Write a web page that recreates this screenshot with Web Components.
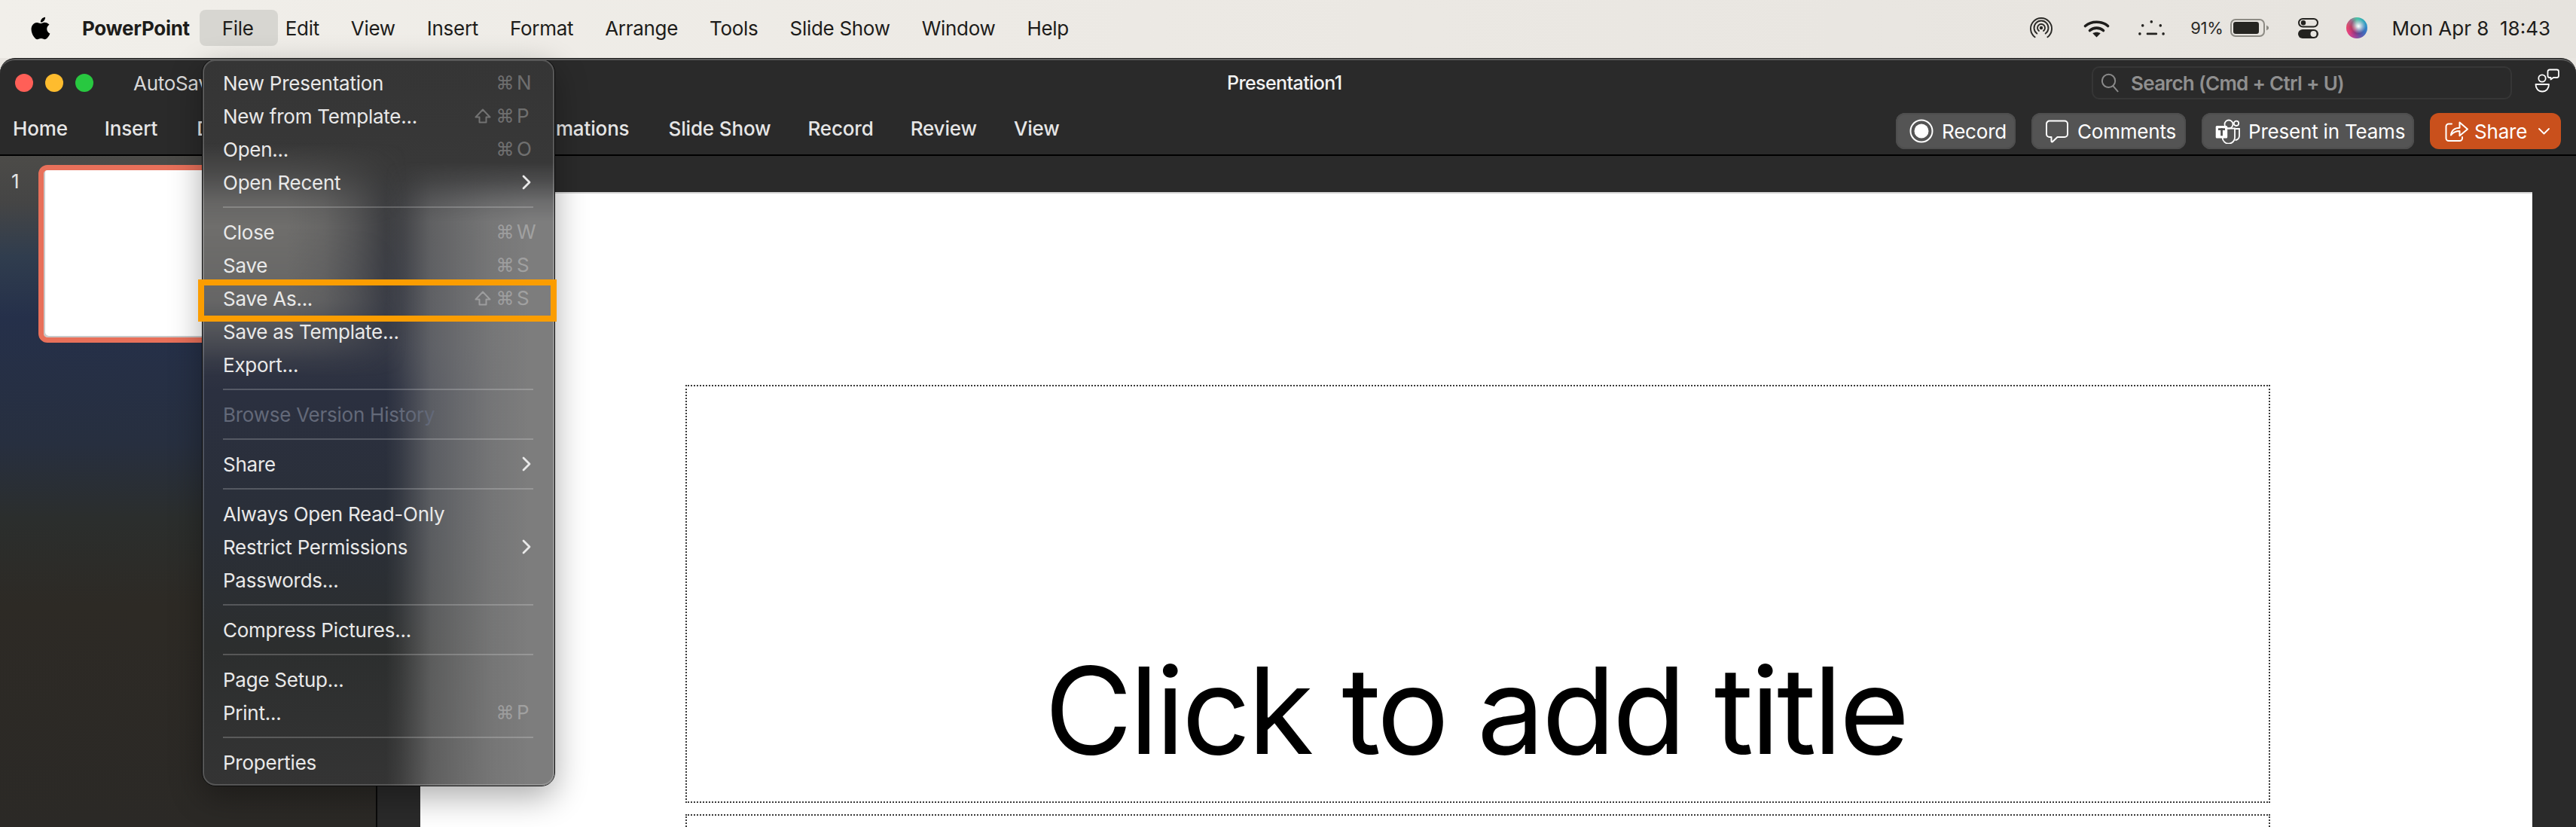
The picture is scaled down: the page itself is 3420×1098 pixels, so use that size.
<!DOCTYPE html>
<html lang="en"><head><meta charset="utf-8"><title>PowerPoint</title>
<style>
html,body{margin:0;padding:0;width:3420px;height:1098px;overflow:hidden;background:#e8e5e0;font-family:Inter,"Liberation Sans",sans-serif}
</style></head><body>
<app-root>
  <mac-menubar></mac-menubar>
  <ppt-window></ppt-window>
  <file-menu></file-menu>
</app-root>
<script>
function def(name, css, html){
  customElements.define(name, class extends HTMLElement{
    constructor(){super();const r=this.attachShadow({mode:'open'});
      if(typeof html!=='function'){
        const t=document.createElement('template');
        t.innerHTML='<style>'+css+'</style>'+html;
        r.appendChild(t.content.cloneNode(true));}}
    connectedCallback(){
      if(typeof html==='function'&&!this._d){this._d=1;
        const t=document.createElement('template');
        t.innerHTML='<style>'+css+'</style>'+html(this);
        this.shadowRoot.appendChild(t.content.cloneNode(true));}
    }
  });
}
const APPLE='<svg width="26" height="31" viewBox="3.5 1.5 17 21" preserveAspectRatio="none"><path fill="#000" d="M18.71 19.5c-.83 1.24-1.71 2.45-3.05 2.47-1.34.03-1.77-.79-3.29-.79-1.53 0-2 .77-3.27.82-1.31.05-2.3-1.32-3.14-2.53C4.25 17 2.94 12.45 4.7 9.39c.87-1.52 2.43-2.48 4.12-2.51 1.28-.02 2.5.87 3.29.87.78 0 2.26-1.07 3.81-.91.65.03 2.47.26 3.64 1.98-.09.06-2.17 1.28-2.15 3.81.03 3.02 2.65 4.03 2.68 4.04-.03.07-.42 1.44-1.38 2.83M13 3.5c.73-.83 1.94-1.46 2.94-1.5.13 1.17-.34 2.35-1.04 3.19-.69.85-1.83 1.51-2.95 1.42-.15-1.15.41-2.35 1.05-3.11z"/></svg>';

def('app-root',`:host{display:block;position:relative;width:3420px;height:1098px;overflow:hidden;font-family:Inter,"Liberation Sans",sans-serif}`,`<slot></slot>`);

def('mac-menubar',`
:host{display:flex;align-items:center;height:77px;box-sizing:border-box;padding:0 34px 3px 41px;background:linear-gradient(90deg,#f1efea,#ece9e4 45%,#e6e3de);color:#1d1c1a;font-size:26px;letter-spacing:-.3px;white-space:nowrap}
.apple{display:flex;width:26px;height:36px;margin-right:42px;align-items:center;justify-content:center}
b{font-weight:700;margin-right:43px}
.items{display:flex;gap:42px}
.on{position:relative;z-index:0}
.on::before{content:"";position:absolute;z-index:-1;left:-30px;right:-32px;top:-9px;bottom:-8px;background:#d7d6d1;border-radius:8px}
.status{margin-left:auto;display:flex;align-items:center}
svg{display:block}
.siri{width:28px;height:28px;border-radius:50%;background:radial-gradient(circle at 58% 42%,#fff 0,rgba(255,255,255,.75) 12%,rgba(255,255,255,0) 42%),radial-gradient(circle at 50% 50%,rgba(40,20,60,.55) 0,rgba(40,20,60,0) 60%),conic-gradient(from 0deg,#49c5a6,#2fa7b9,#2f8fc9,#3d6fc0,#6a55a8,#b33f95,#e5427f,#e0486d,#a4698a,#49c5a6)}
.pct{font-size:22px;letter-spacing:-.3px;color:#2a2926}
.dt{letter-spacing:0}
`,`
<span class="apple">${APPLE}</span><b>PowerPoint</b>
<div class="items"><span class="on">File</span><span>Edit</span><span>View</span><span>Insert</span><span>Format</span><span>Arrange</span><span>Tools</span><span>Slide Show</span><span>Window</span><span>Help</span></div>
<div class="status">
<svg style="margin-right:41px" width="30" height="28" viewBox="0 0 30 28" fill="none" stroke="#2b2a27" stroke-width="1.9" stroke-linecap="round"><path d="M6.6 26.2A14 14 0 1 1 23.4 26.2"/><path d="M9.3 21.6A9.5 9.5 0 1 1 20.7 21.6"/><path d="M12 18A5 5 0 1 1 18 18"/><circle cx="15" cy="14" r="2.2" fill="#2b2a27" stroke="none"/></svg>
<svg style="margin-right:38px" width="35" height="25" viewBox="0 0 35 25" fill="none" stroke="#1f1e1c" stroke-width="3.6" stroke-linecap="round"><path d="M2.5 9.5C10.5 2.5 24.5 2.5 32.5 9.5"/><path d="M8.5 15.5C13.5 11 21.5 11 26.5 15.5"/><path d="M12.3 19.2C15.5 17.2 19.5 17.2 22.7 19.2L17.5 24.5Z" fill="#1f1e1c" stroke="none"/></svg>
<svg style="margin-right:34px" width="35" height="20" viewBox="0 0 35 20" fill="#23221f"><circle cx="17.3" cy="1.9" r="1.8"/><circle cx="5.7" cy="6.9" r="1.8"/><circle cx="29.3" cy="6.9" r="1.8"/><circle cx="1.9" cy="17.9" r="1.8"/><circle cx="33.1" cy="17.9" r="1.8"/><rect x="10.7" y="16.6" width="14.4" height="2.6" rx="1.2"/></svg>
<span class="pct" style="margin-right:9px">91%</span>
<svg style="margin-right:39px" width="51" height="24" viewBox="0 0 51 24" fill="none"><rect x="1" y="1" width="44" height="22" rx="6" stroke="#8d8b84" stroke-width="2"/><rect x="4" y="4" width="34" height="16" rx="3.2" fill="#262521"/><path d="M48 8.5l3 2.2v2.6l-3 2.2z" fill="#8d8b84"/></svg>
<svg style="margin-right:37px" width="27" height="27" viewBox="0 0 27 27" fill="none"><rect x="1" y="1" width="25" height="10.5" rx="5.2" stroke="#23221f" stroke-width="2"/><circle cx="7" cy="6.2" r="3.2" fill="#23221f"/><rect y="15" width="27" height="12" rx="6" fill="#23221f"/><circle cx="20.5" cy="21" r="4" fill="#e8e5e0"/></svg>
<span class="siri" style="margin-right:33px"></span>
<span class="dt" style="white-space:pre">Mon Apr 8  18:43</span>
</div>`);

const I={
 rec:'<svg width="32" height="32" viewBox="0 0 32 32"><circle cx="16" cy="16" r="14.5" fill="none" stroke="#fff" stroke-width="2"/><circle cx="16" cy="16" r="9.5" fill="#fff"/></svg>',
 com:'<svg width="32" height="31" viewBox="0 0 32 31" fill="none" stroke="#fff" stroke-width="2" stroke-linejoin="round"><path d="M6 1.5h20a4 4 0 0 1 4 4v13.5a4 4 0 0 1-4 4H16.5l-6.5 6.2c-.6.5-1.5.1-1.5-.7v-5.500H6a4 4 0 0 1-4-4V5.500a4 4 0 0 1 4-4Z"/></svg>',
 teams:'<svg width="33" height="33" viewBox="0 0 33 33" fill="none" stroke="#fff" stroke-width="1.8"><circle cx="18" cy="7" r="5.500"/><circle cx="28" cy="5.800" r="3.200"/><path d="M15 12.500h11v11.500a8.200 8.200 0 0 1-16.400 1"/><path d="M27 13h5v9.500a5.500 5.500 0 0 1-5.500 5.500"/><rect x=".7" y="9" width="15.500" height="16.500" rx="1.500" fill="#fff" stroke="none"/><rect x="4" y="12.300" width="9" height="2.600" fill="#4a4a4a" stroke="none"/><rect x="7.200" y="12.300" width="2.700" height="10" fill="#4a4a4a" stroke="none"/></svg>',
 share:'<svg width="31" height="28" viewBox="0 0 31 28" fill="none" stroke="#fff" stroke-width="2" stroke-linejoin="round" stroke-linecap="round"><path d="M9 4.500H5A3.500 3.500 0 0 0 1.500 8v15.500A3.500 3.500 0 0 0 5 27h14.500a3.500 3.500 0 0 0 3.500-3.500V22"/><path d="M8 19.500c.5-6 5-9.800 11.500-9.800V2.500L30 11.500l-10.500 8.800v-6.300c-4.500 0-8.500 1.500-11.500 5.500Z"/></svg>',
 chev:'<svg width="15" height="9" viewBox="0 0 15 9" fill="none" stroke="#fff" stroke-width="1.800" stroke-linecap="round" stroke-linejoin="round"><path d="M1 1l6.500 6.500L14 1"/></svg>',
 person:'<svg width="33" height="32" viewBox="0 0 33 32" fill="none" stroke="#fff" stroke-width="1.800" stroke-linejoin="round"><circle cx="10" cy="13" r="4.700"/><path d="M1.500 21h17.500c0 5.500-3.500 9.500-8.800 9.500S1.500 26.500 1.500 21Z"/><path d="M20 1.500h9.500a2.500 2.500 0 0 1 2.500 2.500v5.500a2.500 2.500 0 0 1-2.500 2.500H25l-3.500 2.500v-2.500h-1.500a2.500 2.500 0 0 1-2.500-2.500V4a2.500 2.500 0 0 1 2.500-2.500Z"/></svg>',
 search:'<svg width="26" height="30" viewBox="0 0 30 32" fill="none" stroke="#8a8a8a" stroke-width="2.200" stroke-linecap="round"><ellipse cx="11" cy="13" rx="10" ry="10"/><path d="M18 21l7 8"/></svg>'
};

def('ppt-button',`
:host{display:inline-flex;align-items:center;box-sizing:border-box;height:48px;border-radius:12px;background:#545454;box-shadow:inset 0 0 0 2px #4e4e4e;color:#fff;font-size:26px;letter-spacing:-.2px;white-space:nowrap;gap:11px;padding-left:18px}
:host([accent]){background:#c9501c;box-shadow:none;padding-left:20px;gap:8px}
svg{display:block}
`,h=>`${I[h.getAttribute('icon')]}<slot></slot>${h.hasAttribute('menu')?'<span style="margin-left:7px">'+I.chev+'</span>':''}`);

def('ppt-titlebar',`
:host{display:block;box-sizing:border-box;height:129px;border-bottom:2px solid #000;background:#2a2a2a;color:#fff;font-size:26px;white-space:nowrap}
.r1{display:grid;grid-template-columns:1629px 153px 995px 558px 1fr;height:64px;align-items:center}
.left{display:flex;align-items:center;padding-left:20px}
.dot{width:24px;height:24px;border-radius:50%;margin-right:16px}
.auto{margin-left:37px;color:#d8d8d8;letter-spacing:-.3px}
.title{font-size:25px;font-weight:500;letter-spacing:-.6px;color:#f2f2f2}
.search{display:flex;align-items:center;box-sizing:border-box;height:44px;border:2px solid #363636;border-radius:10px;padding-left:11px;gap:13px;color:#8f8f8f;font-weight:600;letter-spacing:-.7px}
.search svg{display:block}
.person{margin-left:30px;display:block}
.r2{display:flex;justify-content:space-between;align-items:flex-start;padding:2px 20px 0 17px}
.tabs{display:flex;gap:49px;padding-top:10px;color:#e6e6e6;font-weight:500;letter-spacing:-.15px;line-height:34px}
.acts{display:flex;gap:21px;padding-top:6px}
`,`
<div class="r1">
 <div class="left"><span class="dot" style="background:#ff5f57"></span><span class="dot" style="background:#febc2e"></span><span class="dot" style="background:#28c840"></span><span class="auto">AutoSave</span></div>
 <div class="title">Presentation1</div><div></div>
 <div class="search">${I.search}<span>Search (Cmd + Ctrl + U)</span></div>
 <div class="person">${I.person}</div>
</div>
<div class="r2">
 <div class="tabs"><span>Home</span><span>Insert</span><span style="margin-left:3px">D</span><span style="margin-left:409px">mations</span><span style="margin-left:3px">Slide Show</span><span>Record</span><span>Review</span><span>View</span></div>
 <div class="acts">
  <ppt-button icon="rec" style="width:159px">Record</ppt-button>
  <ppt-button icon="com" style="width:205px">Comments</ppt-button>
  <ppt-button icon="teams" style="width:282px">Present in Teams</ppt-button>
  <ppt-button icon="share" accent menu style="width:174px">Share</ppt-button>
 </div>
</div>`);

def('slide-panel',`
:host{display:block;box-sizing:border-box;width:501px;border-right:2px solid #0a0a0a;background:linear-gradient(180deg,#4c4b48 0,#454545 7%,#303d4e 15%,#25304a 24%,#272f3f 43%,#2b2e2d 54%,#2d2a25 67%,#2b2926 100%);padding:12px 0 0 15px;color:#e4e4e4;font-size:26px}
.row{display:flex;align-items:flex-start}
.n{width:36px;line-height:44px}
.th{box-sizing:border-box;width:407px;height:236px;background:#fff;border:7px solid #e8705a;border-radius:12px;box-shadow:inset 2px -2px 0 #c9c9c9}
`,`<div class="row"><span class="n">1</span><div class="th"></div></div>`);

def('ppt-slide',`
:host{display:block;box-sizing:border-box;width:2804px;height:100%;background:#fff;border-top:2px solid #d6d6d6;padding:254px 0 0 352px;color:#000}
.ph{box-sizing:border-box;width:2104px;border:2px dotted #3a3a3a}
.t{height:555px;display:flex;justify-content:center;align-items:flex-end;font-size:160px;line-height:1;padding:0 6px 41px 0;letter-spacing:-4px;white-space:nowrap}
.b{height:300px;margin-top:15px}
`,`<div class="ph t">Click to add title</div><div class="ph b"></div>`);

def('ppt-window',`
:host{display:flex;flex-direction:column;box-sizing:border-box;height:1021px;border-top:1px solid #1a1a1a;border-radius:20px 20px 0 0;overflow:hidden;background:#2a2a2a;position:relative}
:host::before{content:"";position:absolute;z-index:3;left:0;right:0;top:0;height:20px;border-top:2px solid #5c5c5c;border-radius:20px 20px 0 0;pointer-events:none}
.body{display:flex;flex:1;min-height:0}
.canvas{flex:1;padding:48px 0 0 57px;background:#2a2a2a;min-width:0}
`,`<ppt-titlebar></ppt-titlebar><div class="body"><slide-panel></slide-panel><div class="canvas"><ppt-slide></ppt-slide></div></div>`);

const SHIFT='<svg width="22" height="20" viewBox="0 0 22 20" fill="none" stroke="currentColor" stroke-width="2" stroke-linejoin="round"><path d="M11 1.500L20.500 11.500H15.500V18.500H6.500V11.500H1.500Z"/></svg>';
def('menu-row',`
:host{display:flex;align-items:center;height:44px;padding:0 0 0 27px;color:#e9e9e9;font-size:26px;letter-spacing:-.25px;white-space:nowrap;position:relative}
:host([off]){color:#636979}
.sc{margin-left:auto;display:grid;grid-template-columns:22px 21px 26px;column-gap:6.5px;width:82px;margin-right:24px;color:rgba(255,255,255,.3);align-items:center;line-height:44px;letter-spacing:0}
.g svg{display:block}
.k{font-size:24px}
.ch{margin-left:auto;margin-right:31px;display:block}
`,h=>{const s=h.getAttribute('sc');let r='';
 if(s){const sh=s[0]==='S';const k=s[s.length-1];
  r=`<span class="sc"><span class="g">${sh?SHIFT:''}</span><span class="k">⌘</span><span>${k}</span></span>`;}
 if(h.hasAttribute('sub'))r='<svg class="ch" width="12" height="20" viewBox="0 0 12 20" fill="none" stroke="#e9e9e9" stroke-width="2.800" stroke-linecap="round" stroke-linejoin="round"><path d="M2 2l8 8-8 8"/></svg>';
 return `<slot></slot>${r}`;});

def('menu-sep',`:host{display:block;height:2px;margin:10px 28px 10px 27px;background:rgba(255,255,255,.2)}`,``);

def('file-menu',`
:host{position:absolute;left:268px;top:78px;width:469px;box-sizing:border-box;height:966px;padding:9px 0 0;border:1px solid #0c0c0c;border-radius:18px;box-shadow:0 14px 44px rgba(0,0,0,.33);font-family:Inter,"Liberation Sans",sans-serif}
.glass{position:absolute;inset:0;border-radius:17px;overflow:hidden;background:linear-gradient(180deg,#353535 0,#383838 140px,#343845 380px,#2b3040 440px,#2a2f38 620px,#2c2e2e 780px,#343434 964px)}
.glass i{position:absolute;inset:0;display:block}
.thumb{background:linear-gradient(90deg,#6f6e6c 111px,rgba(111,110,108,.85) 161px,rgba(111,110,108,.55) 201px,rgba(111,110,108,.15) 241px,rgba(111,110,108,0) 271px);-webkit-mask-image:linear-gradient(180deg,transparent 111px,rgba(0,0,0,.35) 151px,rgba(0,0,0,.85) 191px,#000 221px,rgba(0,0,0,.85) 321px,rgba(0,0,0,.68) 341px,rgba(0,0,0,.5) 361px,rgba(0,0,0,.1) 401px,transparent 421px);mask-image:linear-gradient(180deg,transparent 111px,rgba(0,0,0,.35) 151px,rgba(0,0,0,.85) 191px,#000 221px,rgba(0,0,0,.85) 321px,rgba(0,0,0,.68) 341px,rgba(0,0,0,.5) 361px,rgba(0,0,0,.1) 401px,transparent 421px)}
.white{background:linear-gradient(90deg,rgba(125,125,125,0) 243px,rgba(125,125,125,.15) 263px,rgba(125,125,125,.37) 283px,rgba(125,125,125,.59) 303px,rgba(125,125,125,.74) 340px,rgba(125,125,125,.91) 385px,#7d7d7d 431px);-webkit-mask-image:linear-gradient(180deg,transparent 136px,rgba(0,0,0,.3) 161px,rgba(0,0,0,.8) 191px,#000 216px);mask-image:linear-gradient(180deg,transparent 136px,rgba(0,0,0,.3) 161px,rgba(0,0,0,.8) 191px,#000 216px)}
.rim{box-shadow:inset 0 0 0 2px rgba(255,255,255,.17);border-radius:17px}
.rows{position:relative}
.mark{position:absolute;left:-6px;top:292px;width:476px;height:56px;box-sizing:border-box;border:8px solid #fb9d00;pointer-events:none}
`,`
<div class="glass"><i class="thumb"></i><i class="white"></i><i class="rim"></i></div>
<div class="rows">
<menu-row sc="C N">New Presentation</menu-row>
<menu-row sc="S P">New from Template...</menu-row>
<menu-row sc="C O">Open...</menu-row>
<menu-row sub>Open Recent</menu-row>
<menu-sep></menu-sep>
<menu-row sc="C W">Close</menu-row>
<menu-row sc="C S">Save</menu-row>
<menu-row sc="S S">Save As...</menu-row>
<menu-row>Save as Template...</menu-row>
<menu-row>Export...</menu-row>
<menu-sep></menu-sep>
<menu-row off>Browse Version History</menu-row>
<menu-sep></menu-sep>
<menu-row sub>Share</menu-row>
<menu-sep></menu-sep>
<menu-row>Always Open Read-Only</menu-row>
<menu-row sub>Restrict Permissions</menu-row>
<menu-row>Passwords...</menu-row>
<menu-sep></menu-sep>
<menu-row>Compress Pictures...</menu-row>
<menu-sep></menu-sep>
<menu-row>Page Setup...</menu-row>
<menu-row sc="C P">Print...</menu-row>
<menu-sep></menu-sep>
<menu-row>Properties</menu-row>
</div>
<div class="mark"></div>`);
</script>
</body></html>
